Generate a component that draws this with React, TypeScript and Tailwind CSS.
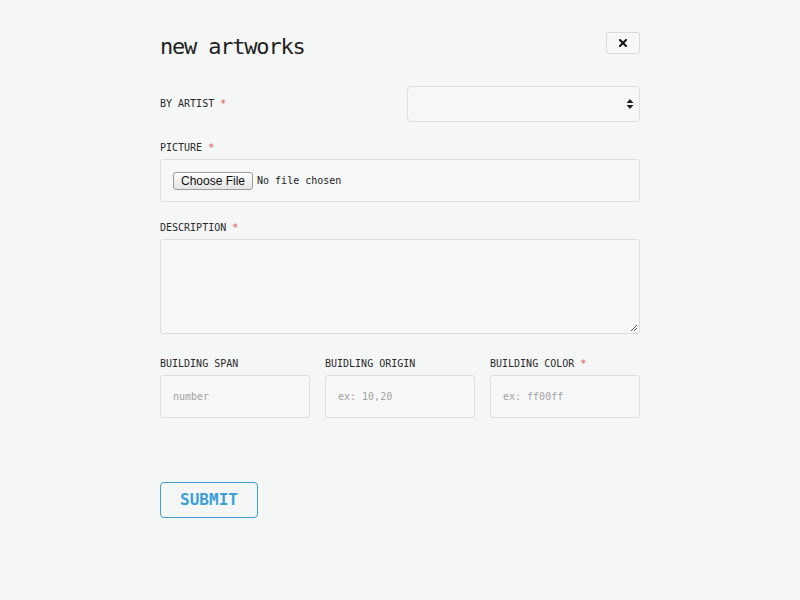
import React from "react";

const mono = "font-['DejaVu_Sans_Mono','Liberation_Mono',monospace]";

function Label({ text, required }: { text: string; required?: boolean }) {
    return (
        <div className={`${mono} text-[10px] leading-[12px] text-[#2a2a2a] h-[12px]`}>
            {text}
            {required && <span className="text-[#e2574c] ml-[6px]">*</span>}
        </div>
    );
}

function SmallInput({ placeholder }: { placeholder: string }) {
    return (
        <div className="h-[43px] border border-[#dedede] rounded-[3px] bg-[#f6f7f7] flex items-center px-[12px]">
            <span className={`${mono} text-[10px] text-[#a3a3a3]`}>{placeholder}</span>
        </div>
    );
}

export default function App() {
    return (
        <div className="w-[800px] h-[600px] bg-[#f5f6f6] overflow-hidden">
            <div className="w-[480px] mx-auto pt-[32px] flex flex-col">
                <div className="flex justify-between items-start">
                    <h1 className={`${mono} text-[22px] leading-[28px] tracking-[-1.2px] text-[#222] mt-[1px]`}>new artworks</h1>
                    <button className="w-[34px] h-[22px] border border-[#d9d9d9] rounded-[3px] bg-[#f7f7f7] flex items-center justify-center">
                        <svg width="8" height="8" viewBox="0 0 8 8">
                            <path d="M1 1L7 7M7 1L1 7" stroke="#111" strokeWidth="2" strokeLinecap="square" />
                        </svg>
                    </button>
                </div>

                <div className="flex justify-between items-center mt-[25px]">
                    <Label text="BY ARTIST" required />
                    <div className="w-[233px] h-[36px] border border-[#dedede] rounded-[4px] bg-[#f6f7f7] flex items-center justify-end pr-[5px]">
                        <svg width="8" height="12" viewBox="0 0 8 12">
                            <path d="M4 1L7.5 5H0.5Z" fill="#222" />
                            <path d="M4 11L7.5 7H0.5Z" fill="#222" />
                        </svg>
                    </div>
                </div>

                <div className="mt-[20px]">
                    <Label text="PICTURE" required />
                    <div className="mt-[5px] h-[43px] border border-[#dedede] rounded-[3px] bg-[#f6f7f7] flex items-center px-[12px]">
                        <span className="h-[18px] px-[7px] border border-[#9c9c9c] rounded-[3px] bg-gradient-to-b from-[#fdfdfd] to-[#e4e4e4] font-['Liberation_Sans',Arial,sans-serif] text-[12px] leading-[16px] text-[#111]">
                            Choose File
                        </span>
                        <span className={`${mono} text-[10px] text-[#222] ml-[4px]`}>No file chosen</span>
                    </div>
                </div>

                <div className="mt-[20px]">
                    <Label text="DESCRIPTION" required />
                    <div className="mt-[5px] h-[95px] border border-[#dedede] rounded-[3px] bg-[#f6f7f7] relative">
                        <svg className="absolute right-[1px] bottom-[1px]" width="8" height="8" viewBox="0 0 8 8">
                            <path d="M7 1L1 7M7 4L4 7" stroke="#555" strokeWidth="1" />
                        </svg>
                    </div>
                </div>

                <div className="mt-[24px] grid grid-cols-3 gap-x-[15px]">
                    <div className="flex flex-col gap-[5px]">
                        <Label text="BUILDING SPAN" />
                        <SmallInput placeholder="number" />
                    </div>
                    <div className="flex flex-col gap-[5px]">
                        <Label text="BUIDLING ORIGIN" />
                        <SmallInput placeholder="ex: 10,20" />
                    </div>
                    <div className="flex flex-col gap-[5px]">
                        <Label text="BUILDING COLOR" required />
                        <SmallInput placeholder="ex: ff00ff" />
                    </div>
                </div>

                <div className="mt-[64px]">
                    <button className={`${mono} w-[98px] h-[36px] border border-[#3b9fd9] rounded-[4px] text-[#3b9fd9] text-[16px] font-bold`}>
                        SUBMIT
                    </button>
                </div>
            </div>
        </div>
    );
}
